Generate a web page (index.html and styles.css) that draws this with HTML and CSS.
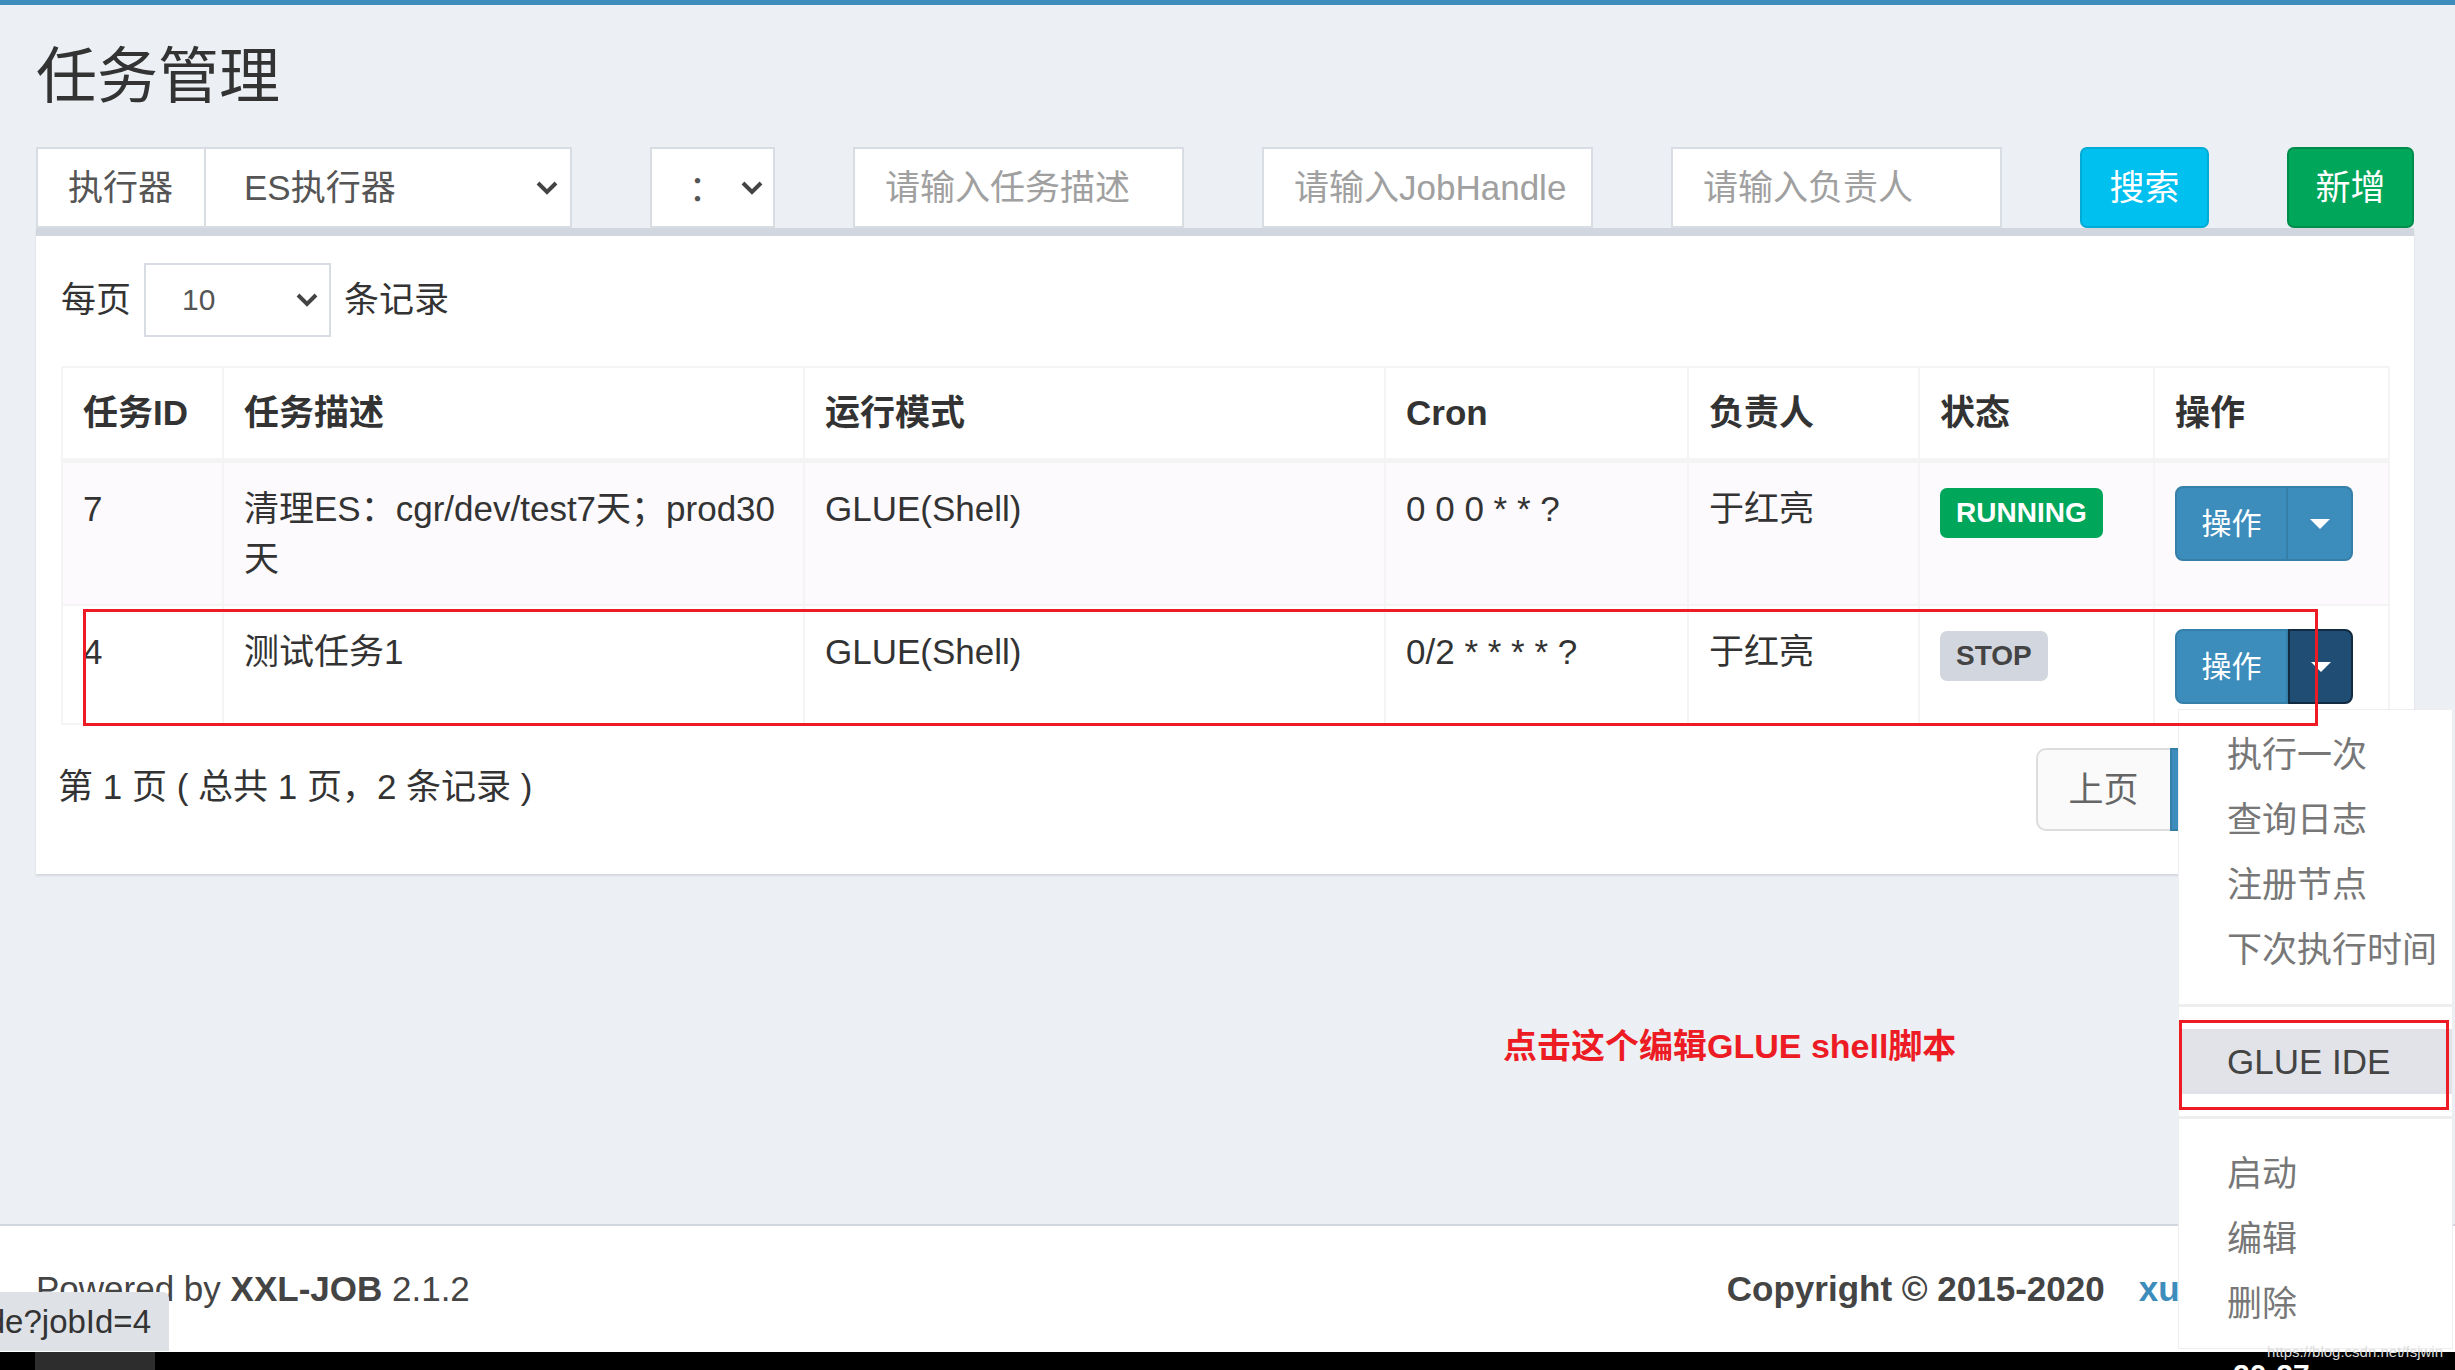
FILE: index.html
```html
<!DOCTYPE html>
<html lang="zh-CN">
<head>
  <meta charset="UTF-8">
  <meta name="viewport" content="width=device-width, initial-scale=1.0">
  <title>任务管理</title>
  <link rel="stylesheet" href="styles.css">
</head>

<body>
  <div class="page">
    <div class="topbar"></div>

    <div class="content">
      <h1 class="page-title">任务管理</h1>

      <!-- search filters -->
      <div class="filters">
        <div class="input-group">
          <span class="addon">执行器</span>
          <div class="select select-group">
            <span>ES执行器</span>
            <svg class="chevron" width="22" height="14" viewBox="0 0 22 14"><path d="M2 2l9 9 9-9" fill="none" stroke="#444" stroke-width="4"/></svg>
          </div>
        </div>
        <div class="select select-status">
          <span class="punct">：</span>
          <svg class="chevron" width="22" height="14" viewBox="0 0 22 14"><path d="M2 2l9 9 9-9" fill="none" stroke="#444" stroke-width="4"/></svg>
        </div>
        <div class="input">请输入任务描述</div>
        <div class="input">请输入JobHandle</div>
        <div class="input">请输入负责人</div>
        <button class="btn btn-info">搜索</button>
        <button class="btn btn-success">新增</button>
      </div>

      <div class="box">
        <div class="box-body">
          <div class="length-row">
            <span>每页</span>
            <div class="select select-sm">
              <span>10</span>
              <svg class="chevron" width="22" height="14" viewBox="0 0 22 14"><path d="M2 2l9 9 9-9" fill="none" stroke="#444" stroke-width="4"/></svg>
            </div>
            <span>条记录</span>
          </div>

          <div class="table-wrap">
            <table class="job-table">
              <colgroup>
                <col style="width: 161px">
                <col style="width: 581px">
                <col style="width: 581px">
                <col style="width: 303px">
                <col style="width: 231px">
                <col style="width: 235px">
                <col style="width: 235px">
              </colgroup>
              <thead>
                <tr>
                  <th>任务ID</th>
                  <th>任务描述</th>
                  <th>运行模式</th>
                  <th>Cron</th>
                  <th>负责人</th>
                  <th>状态</th>
                  <th>操作</th>
                </tr>
              </thead>
              <tbody>
                <tr>
                  <td>7</td>
                  <td>清理ES：cgr/dev/test7天；prod30天</td>
                  <td>GLUE(Shell)</td>
                  <td>0 0 0 * * ?</td>
                  <td>于红亮</td>
                  <td><span class="label label-success">RUNNING</span></td>
                  <td class="op-cell">
                    <div class="btn-group">
                      <span class="btn-op">操作</span>
                      <span class="btn-caret"><svg width="20" height="10" viewBox="0 0 20 10"><path d="M0 0h20L10 10z" fill="#fff"/></svg></span>
                    </div>
                  </td>
                </tr>
                <tr>
                  <td>4</td>
                  <td>测试任务1</td>
                  <td>GLUE(Shell)</td>
                  <td>0/2 * * * * ?</td>
                  <td>于红亮</td>
                  <td><span class="label label-default">STOP</span></td>
                  <td class="op-cell">
                    <div class="btn-group open">
                      <span class="btn-op">操作</span>
                      <span class="btn-caret"><svg width="20" height="10" viewBox="0 0 20 10"><path d="M0 0h20L10 10z" fill="#fff"/></svg></span>
                      <ul class="dropdown-menu">
                        <li><a>执行一次</a></li>
                        <li><a>查询日志</a></li>
                        <li><a>注册节点</a></li>
                        <li><a>下次执行时间</a></li>
                        <li class="divider"></li>
                        <li class="active"><a>GLUE IDE</a><span class="mark-menu"></span></li>
                        <li class="divider"></li>
                        <li><a>启动</a></li>
                        <li><a>编辑</a></li>
                        <li><a>删除</a></li>
                      </ul>
                    </div>
                  </td>
                </tr>
              </tbody>
            </table>
            <!-- red annotation around the second row -->
            <div class="mark-row"></div>
          </div>

          <div class="pager-row">
            <div class="pager-info">第 1 页 ( 总共 1 页，2 条记录 )</div>
            <ul class="pagination">
              <li><a>上页</a></li>
              <li class="active"><a>1</a></li>
              <li><a>下页</a></li>
            </ul>
          </div>
        </div>
      </div>
    </div>

    <footer class="footer">
      <div>Powered by <b>XXL-JOB</b> 2.1.2</div>
      <div class="copyright"><b>Copyright © 2015-2020</b><a class="footer-link">xuxueli.com</a></div>
    </footer>
    <div class="taskbar"><span class="taskbar-app"></span></div>

    <!-- overlays from the screenshot -->
    <div class="note">点击这个编辑GLUE shell脚本</div>
    <div class="status-bubble">jobcode?jobId=4</div>
    <div class="watermark">https://blog.csdn.net/fsjwin</div>
    <div class="clock">20:27</div>
  </div>
</body>
</html>
```

FILE: styles.css
```css
* {
  margin: 0;
  padding: 0;
  box-sizing: border-box;
}

body {
  height: 1370px;
  overflow: hidden;
  background-color: #ecf0f5;
  color: #333;
  font-family: "Liberation Sans", "Noto Sans CJK SC", sans-serif;
  font-size: 35px;
  line-height: 50px;
}

.page {
  position: relative;
  height: 100%;
  display: flex;
  flex-direction: column;
}

.topbar {
  height: 5px;
  flex-shrink: 0;
  background-color: #3c8dbc;
}

.content {
  flex: 1;
  padding: 39px 41px 0 36px;
}

.page-title {
  font-size: 61px;
  font-weight: normal;
  line-height: 66px;
  color: #333;
}

/* centered full-width colon */
.punct {
  font-family: "Noto Sans CJK TC", sans-serif;
}

/* filter bar */
.filters {
  display: flex;
  gap: 78px;
  height: 81px;
  margin-top: 37px;
}

.input-group {
  display: flex;
}

.addon {
  width: 168px;
  padding: 0 30px;
  background-color: #fff;
  border: 2px solid #d8dce3;
  border-right: none;
  color: #555;
  line-height: 77px;
  white-space: nowrap;
}

.select {
  display: flex;
  align-items: center;
  justify-content: space-between;
  background-color: #fff;
  border: 2px solid #d8dce3;
  color: #555;
  white-space: nowrap;
}

.select-group {
  width: 368px;
  padding: 0 12px 0 38px;
}

.select-status {
  width: 125px;
  padding: 0 10px 0 28px;
}

.select-sm {
  width: 187px;
  height: 74px;
  padding: 0 11px 0 36px;
  font-size: 30px;
}

.input {
  width: 331px;
  padding: 0 30px;
  background-color: #fff;
  border: 2px solid #d8dce3;
  color: #a0a0a0;
  line-height: 77px;
  white-space: nowrap;
  overflow: hidden;
}

.btn {
  width: 129px;
  border: 2px solid;
  border-radius: 7px;
  color: #fff;
  font: inherit;
  line-height: 77px;
}

.btn-info {
  background-color: #00c0ef;
  border-color: #00acd6;
}

.btn-success {
  width: 127px;
  background-color: #00a65a;
  border-color: #008d4c;
}

/* main box */
.box {
  background-color: #fff;
  border-top: 8px solid #d2d6de;
  box-shadow: 0 2px 2px rgba(0, 0, 0, 0.1);
}

.box-body {
  padding: 27px 25px 25px;
}

.length-row {
  display: flex;
  align-items: center;
  gap: 13px;
  height: 74px;
}

.table-wrap {
  position: relative;
  margin-top: 29px;
}

.job-table {
  width: 2327px;
  table-layout: fixed;
  border-collapse: collapse;
}

.job-table th, .job-table td {
  padding: 21px 20px 20px;
  border: 2px solid #f4f4f4;
  text-align: left;
  vertical-align: top;
}

.job-table thead th {
  padding-top: 20px;
  border-bottom-width: 5px;
  font-weight: bold;
}

.job-table tbody tr:nth-child(odd) {
  background-color: #fcfafd;
}

.job-table td.op-cell {
  padding-top: 20px;
  padding-bottom: 19px;
}

.label {
  display: inline-block;
  vertical-align: top;
  height: 50px;
  margin-top: 4px;
  padding: 0 16px;
  border-radius: 7px;
  font-size: 28px;
  font-weight: bold;
  line-height: 50px;
}

.label-success {
  background-color: #00a65a;
  color: #fff;
}

.label-default {
  background-color: #d2d6de;
  color: #444;
}

.btn-group {
  position: relative;
  display: inline-flex;
  vertical-align: top;
  height: 75px;
  margin-top: 3px;
}

.btn-op {
  width: 113px;
  background-color: #3c8dbc;
  border: 2px solid #367fa9;
  border-radius: 8px 0 0 8px;
  color: #fff;
  font-size: 30px;
  line-height: 71px;
  text-align: center;
}

.btn-caret {
  display: flex;
  align-items: center;
  justify-content: center;
  width: 65px;
  background-color: #3c8dbc;
  border: 2px solid #367fa9;
  border-left: none;
  border-radius: 0 8px 8px 0;
}

.btn-group.open .btn-caret {
  background-color: #204d74;
  border: 2px solid #122b40;
}

.dropdown-menu {
  position: absolute;
  top: 80px;
  left: 3px;
  z-index: 1000;
  width: 275px;
  padding: 12px 0;
  list-style: none;
  background-color: #fff;
  border: 1px solid #eee;
}

.dropdown-menu li {
  position: relative;
}

.dropdown-menu li a {
  display: block;
  padding: 7.5px 48px;
  color: #777;
  white-space: nowrap;
}

.dropdown-menu .divider {
  height: 3px;
  margin: 22px 0;
  background-color: #eee;
}

.dropdown-menu .active a {
  background-color: #e1e3e9;
  color: #444;
}

.mark-menu {
  position: absolute;
  top: -9px;
  bottom: -16px;
  left: 0;
  right: 3px;
  border: 3px solid #ed1c24;
}

.mark-row {
  position: absolute;
  top: 243px;
  left: 22px;
  z-index: 1001;
  width: 2235px;
  height: 117px;
  border: 3px solid #ed1c24;
}

/* pager */
.pager-row {
  display: flex;
  justify-content: space-between;
  margin: 23px 0 18px;
}

.pager-info {
  padding-top: 14px;
  margin-left: -3px;
}

.pagination {
  display: flex;
  list-style: none;
}

.pagination a {
  display: block;
  height: 83px;
  margin-left: -2px;
  padding: 0 31px;
  background-color: #fafafa;
  border: 2px solid #ddd;
  color: #666;
  line-height: 79px;
}

.pagination li:first-child a {
  border-radius: 10px 0 0 10px;
}

.pagination li:last-child a {
  border-radius: 0 10px 10px 0;
}

.pagination .active a {
  background-color: #3c8dbc;
  border-color: #367fa9;
  color: #fff;
}

/* footer */
.footer {
  display: flex;
  align-items: center;
  justify-content: space-between;
  flex-shrink: 0;
  height: 128px;
  padding: 0 114px 0 36px;
  background-color: #fff;
  border-top: 2px solid #d2d6de;
  color: #444;
}

.footer-link {
  margin-left: 34px;
  color: #3c8dbc;
  font-weight: bold;
  text-decoration: none;
}

.taskbar {
  height: 18px;
  flex-shrink: 0;
  background-color: #000;
}

.taskbar-app {
  display: block;
  width: 120px;
  height: 100%;
  margin-left: 35px;
  background-color: #2d2d2d;
}

/* overlays */
.note {
  position: absolute;
  top: 1021px;
  left: 1503px;
  z-index: 1001;
  color: #ed1c24;
  font-size: 34px;
  font-weight: bold;
  white-space: nowrap;
}

.status-bubble {
  position: absolute;
  top: 1292px;
  left: 0;
  z-index: 1002;
  display: flex;
  align-items: center;
  justify-content: flex-end;
  width: 169px;
  height: 59px;
  padding-right: 18px;
  overflow: hidden;
  background-color: #dee1e6;
  border-top-right-radius: 6px;
  color: #333;
  font-size: 33px;
  white-space: nowrap;
}

.watermark {
  position: absolute;
  top: 1340px;
  right: 12px;
  z-index: 1002;
  color: #ddd;
  font-size: 15px;
  line-height: 24px;
}

.clock {
  position: absolute;
  top: 1360px;
  left: 2233px;
  z-index: 1002;
  color: #fff;
  font-size: 30px;
  font-weight: bold;
  line-height: 30px;
}
```
